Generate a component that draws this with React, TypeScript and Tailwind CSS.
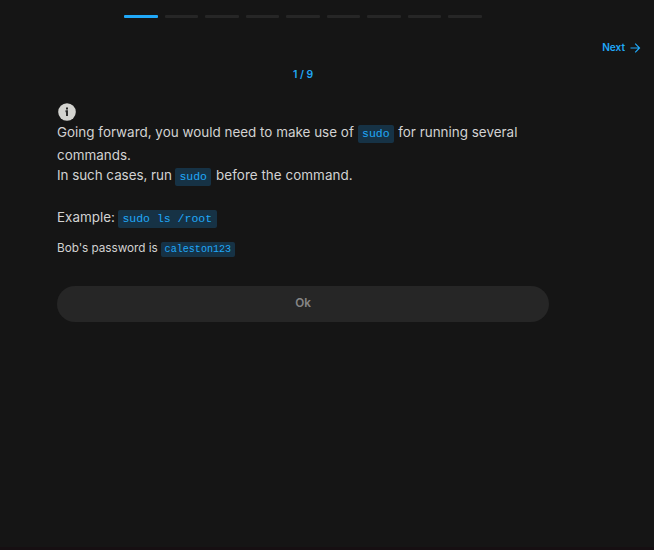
import type { ReactNode } from "react";

const STEP_COUNT = 9;

function Code({ children, small = false }: { children: ReactNode; small?: boolean }) {
  return (
    <code
      className={
        small
          ? "-ml-[0.3px] rounded-[2px] bg-[#163245] px-[4px] pt-[2px] pb-[2px] font-['Liberation_Mono',monospace] text-[10.08px] text-[#20a8f8]"
          : "rounded-[2px] bg-[#163245] px-[4.4px] pt-[2px] pb-[3px] font-['Liberation_Mono',monospace] text-[11.5px] text-[#20a8f8]"
      }
    >
      {children}
    </code>
  );
}

export default function App() {
  return (
    <div className="flex h-[550px] w-[654px] flex-col overflow-hidden bg-[#151515] font-[Inter,sans-serif] text-[#d2d2d2]">
      <div className="ml-[124px] mt-[15px] flex w-[358px] gap-[6.8px]">
        {Array.from({ length: STEP_COUNT }, (_, i) => (
          <div
            key={i}
            className={i === 0 ? "h-[3px] flex-1 rounded-[1px] bg-[#20a8f8]" : "h-[3px] flex-1 rounded-[1px] bg-[#262626]"}
          />
        ))}
      </div>

      <button className="mr-[13px] mt-[22px] flex h-4 items-center gap-[4px] self-end text-[10.08px] font-semibold text-[#20a8f8]">
        Next
        <svg className="size-3" viewBox="0 0 12 12" fill="none" stroke="currentColor" strokeWidth="1.2">
          <path d="M1.5 6h9M6.2 1.7 10.5 6l-4.3 4.3" />
        </svg>
      </button>

      <main className="ml-[57px] flex w-[492px] flex-col">
        <div className="mt-[11px] h-4 text-center text-[10.4px] font-semibold leading-4 text-[#20a8f8]">1 / 9</div>

        <svg className="ml-[1px] mt-[20px] size-[18px]" viewBox="0 0 18 18">
          <circle cx="9" cy="9" r="8.8" fill="#d3d3cf" />
          <rect x="8" y="4.5" width="2" height="2" fill="#252525" />
          <path d="M7.5 8.2h1.5v4.8" fill="none" stroke="#252525" strokeWidth="1.9" />
        </svg>

        <div className="whitespace-nowrap text-[13.44px]">
          <p className="h-[23px] leading-[23px]">
            Going forward, you would need to make use of <Code>sudo</Code>
            <span className="ml-[0.4px]"> for running several</span>
          </p>
          <p className="h-[20px] leading-[23px]">commands.</p>
          <p className="h-[42px] leading-[23px]">
            <span className="-mr-[0.6px] tracking-[-0.05px]">In such cases, run </span>
            <Code>sudo</Code>
            <span className="ml-[0.9px] tracking-[0.03px]"> before the command.</span>
          </p>
          <p className="h-[31px] leading-[23px]">
            <span className="-mr-[0.7px]">Example: </span>
            <Code>sudo ls /root</Code>
          </p>
        </div>
        <p className="h-[49px] whitespace-nowrap text-[11.76px] leading-[23px]">
          <span className="tracking-[-0.04px]">Bob's password is </span>
          <Code small>caleston123</Code>
        </p>

        <button className="h-9 rounded-full bg-[#262626] text-[11.76px] font-semibold text-[#858585]">Ok</button>
      </main>

      <div className="mt-auto h-[3px] bg-[#160f12]" />
    </div>
  );
}
